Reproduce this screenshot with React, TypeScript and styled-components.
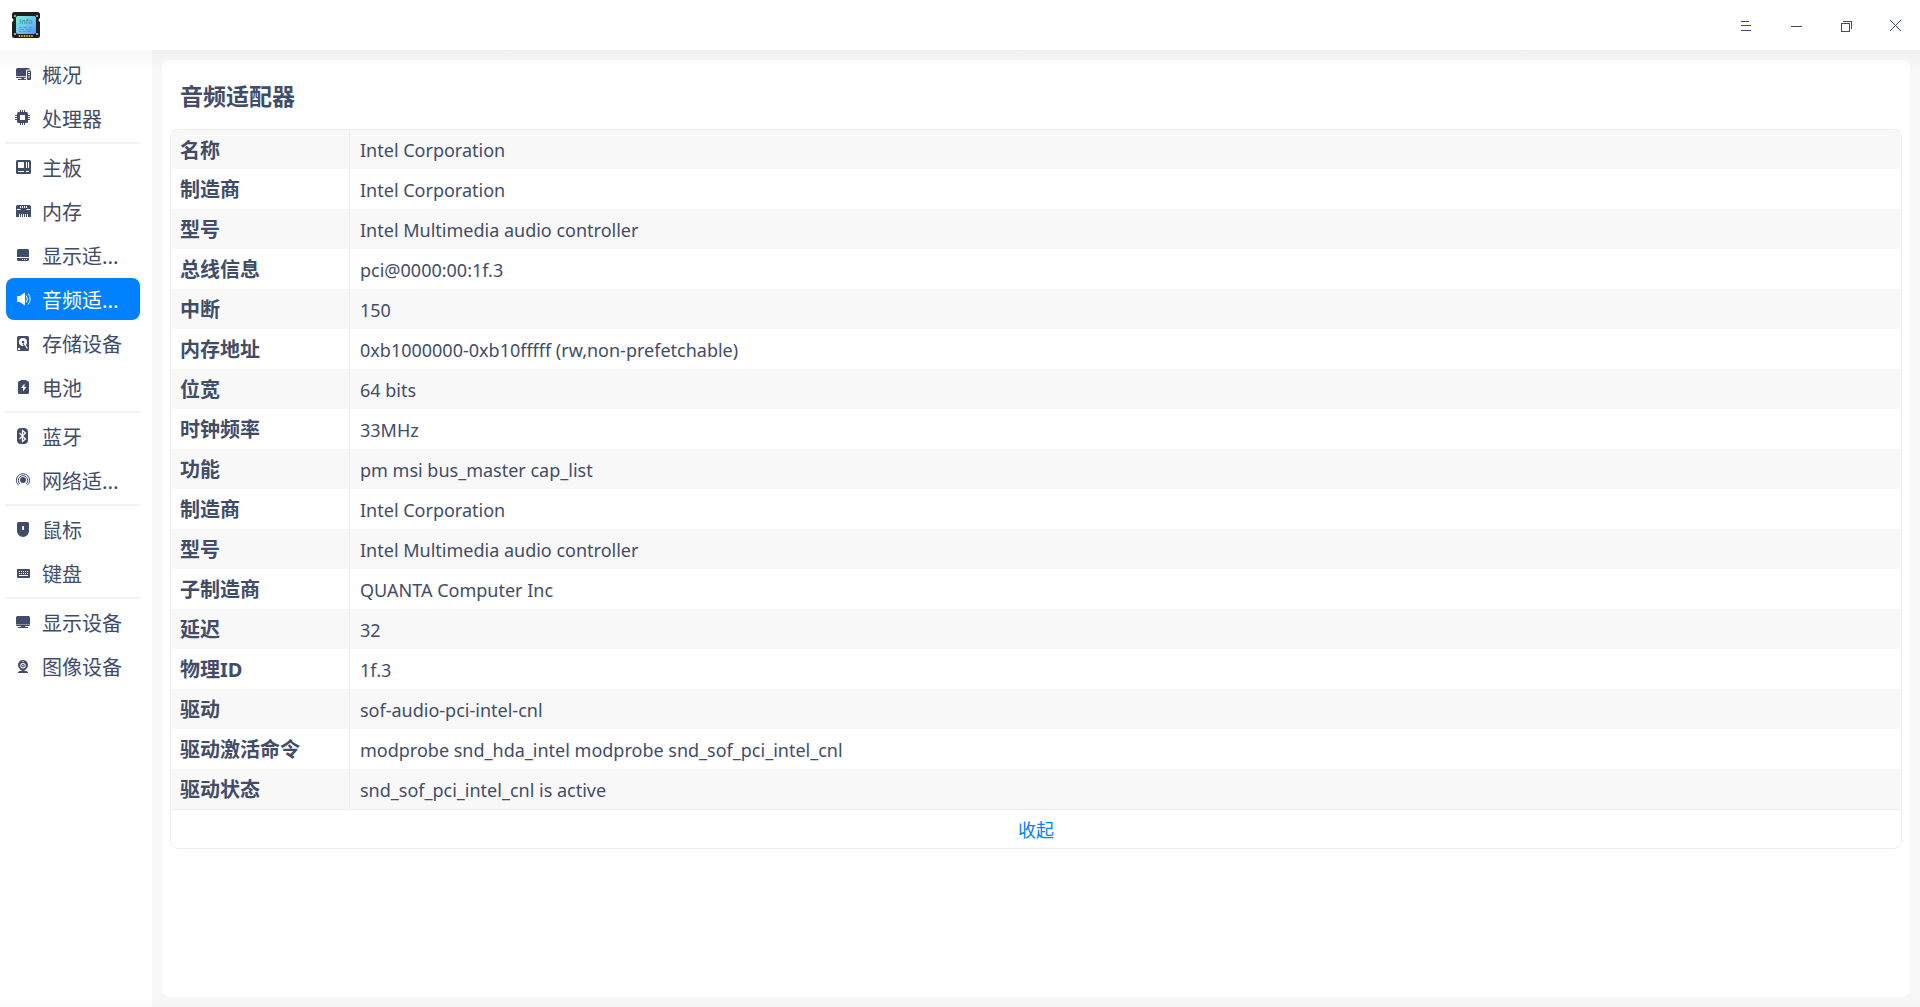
import React, { useState } from "react";
import styled, { createGlobalStyle } from "styled-components";

const color = {
  text: "#414d68",
  accent: "#0081ff",
  panel: "#f8f8f8",
  line: "#ededed",
};

const GlobalStyle = createGlobalStyle`
  *, *::before, *::after { box-sizing: border-box; }
  body {
    margin: 0;
    background: #fff;
    color: ${color.text};
    font-family: "Noto Sans", "Noto Sans CJK SC", sans-serif;
  }
  button { font: inherit; color: inherit; border: 0; background: none; padding: 0; cursor: pointer; }
`;

const Window = styled.div`
  display: grid;
  grid-template: 50px 1fr / 152px 1fr;
  min-height: 100vh;
`;

const TitleBar = styled.header`
  grid-column: 1 / -1;
  display: flex;
  align-items: center;
  justify-content: space-between;
  padding-left: 10px;
  background: #fff;
`;

const WindowControls = styled.div`
  display: flex;
`;

const ControlButton = styled.button`
  display: flex;
  align-items: center;
  justify-content: center;
  width: 50px;
  height: 50px;

  &:hover { background: rgba(0, 0, 0, 0.06); }
`;

const edgeShade =
  "linear-gradient(rgba(0, 0, 0, 0.03), rgba(0, 0, 0, 0) 20px), linear-gradient(to top, rgba(0, 0, 0, 0.02), rgba(0, 0, 0, 0) 8px)";

const Sidebar = styled.nav`
  padding: 3px 0;
  background: ${edgeShade}, #fff;
`;

const NavList = styled.ul`
  display: flex;
  flex-direction: column;
  gap: 2px;
  margin: 0;
  padding: 0;
  list-style: none;
`;

const NavRow = styled.li`
  padding: 0 12px 0 6px;
`;

const NavDivider = styled.li`
  height: 2px;
  margin: 1px 11px 0 5px;
  background: #f2f2f2;
`;

const NavButton = styled.button<{ $active: boolean }>`
  display: flex;
  align-items: center;
  gap: 10px;
  width: 100%;
  height: 42px;
  padding-left: 10px;
  border-radius: 8px;
  background: ${(p) => (p.$active ? color.accent : "transparent")};
  color: ${(p) => (p.$active ? "#fff" : color.text)};
  --knock: ${(p) => (p.$active ? color.accent : "#fff")};
`;

const NavLabel = styled.span`
  padding-top: 2px;
  font-family: "Noto Sans CJK SC", sans-serif;
  font-size: 20px;
  line-height: 30px;
  white-space: nowrap;
`;

const IconSvg = styled.svg`
  flex: none;
  overflow: visible;
`;

const Main = styled.main`
  display: flex;
  padding: 10px;
  background: ${edgeShade}, ${color.panel};
`;

const Card = styled.section`
  flex: 1;
  padding: 18px 8px;
  border-radius: 8px;
  background: linear-gradient(rgba(0, 0, 0, 0.012), rgba(0, 0, 0, 0) 10px), #fff;
`;

const Title = styled.h1`
  margin: 0 0 17px;
  padding-left: 10px;
  font-family: "Noto Sans CJK SC", sans-serif;
  font-size: 23px;
  line-height: 34px;
  font-weight: 700;
`;

const TableFrame = styled.div`
  border: 1px solid ${color.line};
  border-radius: 8px;
  overflow: hidden;
`;

const Table = styled.table`
  width: 100%;
  border-collapse: separate;
  border-spacing: 0;
`;

const Row = styled.tr`
  height: 40px;

  &:first-child { height: 39px; }
  &:nth-child(odd) { background: ${color.panel}; }
`;

const KeyCell = styled.th`
  width: 179px;
  padding: 2px 9px 0;
  border-right: 1px solid ${color.line};
  font-size: 20px;
  line-height: 30px;
  font-weight: 700;
  text-align: left;
  white-space: nowrap;
`;

const ValueCell = styled.td`
  padding: 1px 10px 0;
  font-size: 18px;
  line-height: 30px;
`;

const FoldButton = styled.button`
  display: block;
  width: 100%;
  height: 39px;
  border-top: 1px solid ${color.line};
  color: ${color.accent};
  font-family: "Noto Sans CJK SC", sans-serif;
  font-size: 18px;
  line-height: 30px;
`;

type IconName =
  | "overview" | "cpu" | "board" | "memory" | "gpu" | "audio" | "disk"
  | "battery" | "bluetooth" | "network" | "mouse" | "keyboard" | "monitor" | "camera";

const knock = "var(--knock)";

const drawings: Record<IconName, React.ReactNode> = {
  overview: (
    <>
      <path d="M1.500 2h11A1.500 1.500 0 0 1 14 3.500h-2.500a1.500 1.500 0 0 0-1.500 1.500V10H0V3.500A1.500 1.500 0 0 1 1.500 2z" />
      <path d="M0 10.700h10v.6q0 .7-.7.7H.7Q0 12 0 11.300zM5.500 12h2.500v1H10v1H2v-1h3.500z" />
      <rect x="11" y="4.500" width="4" height="9.500" rx="1" />
      <path d="M12 6.500h2M12 8.500h2M12 11h2" stroke={knock} strokeWidth="1" />
    </>
  ),
  cpu: (
    <>
      <rect x="1" y="2" width="11" height="11" rx="1.500" />
      <path d="M4.500 0v15M6.500 0v15M8.500 0v15M-1 5.500h15M-1 7.500h15M-1 9.500h15" stroke="currentColor" strokeWidth="1" />
      <rect x="4" y="5" width="5" height="5" rx="0.500" fill={knock} />
    </>
  ),
  board: (
    <>
      <rect x="0" y="1" width="15" height="14" rx="1.500" />
      <path d="M2.500 3h5l.5.500v5l-.5.500h-5L2 8.500v-5zM10 3h1v6h-1zM12 3h1v6h-1zM2 12h6v1H2zM10 12h3v1h-3z" fill={knock} />
    </>
  ),
  memory: (
    <>
      <path d="M1.500 2h12A1.500 1.500 0 0 1 15 3.500v10q0 .5-.5.5H.5Q0 14 0 13.500v-10A1.500 1.500 0 0 1 1.500 2z" />
      <path d="M4 3h1v2H4zM6 3h1v2H6zM8 3h1v2H8zM10 3h1v2h-1zM1 6h3l1 1H1zM11 6h3v1h-4zM3 11h1v3H3zM5 11h1v3H5zM7 11h1v3H7zM9 11h1v3H9zM11 11h1v3h-1z" fill={knock} />
    </>
  ),
  gpu: (
    <>
      <rect x="1" y="2" width="12" height="12" rx="1.500" />
      <path d="M1 10h12v1H1zM6 12h1v1H6zM8 12h1v1H8zM10 12h1v1h-1z" fill={knock} />
    </>
  ),
  audio: (
    <>
      <path d="M1.500 5H4l4-3q1-.5 1 .5v11q0 1-1 .5l-4-3H1.500Q1 11 1 10.500v-5Q1 5 1.500 5z" />
      <path d="M10.500 5q2 3 0 6M12.500 3q3.500 5 0 10" fill="none" stroke="currentColor" strokeWidth="1" strokeLinecap="round" />
    </>
  ),
  disk: (
    <>
      <rect x="1" y="1" width="12" height="15" rx="1.500" />
      <circle cx="7" cy="7" r="4" fill={knock} />
      <circle cx="7" cy="7" r="1.300" />
      <path d="M7 8.500l3 5" stroke="currentColor" strokeWidth="1.200" />
      <path d="M8.500 9l3 4.500M2.500 13.500h1v1h-1z" fill={knock} stroke={knock} strokeWidth="1.200" />
    </>
  ),
  battery: (
    <>
      <path d="M4.500 1h6v1h1A1.500 1.500 0 0 1 13 3.500v10a1.500 1.500 0 0 1-1.500 1.500h-8A1.500 1.500 0 0 1 2 13.500v-10A1.500 1.500 0 0 1 3.500 2h1z" />
      <path d="M8.500 4.500L5 9h2v3.500L10.500 8h-2z" fill={knock} />
    </>
  ),
  bluetooth: (
    <>
      <rect x="1" y="0" width="11" height="16" rx="4" />
      <path d="M3.500 5l6 6-3 2.500v-11l3 2.500-6 6" fill="none" stroke={knock} strokeWidth="1.200" />
    </>
  ),
  network: (
    <>
      <circle cx="7" cy="8" r="3" />
      <path d="M4 12a4.700 4.700 0 1 1 6 0M2.700 13.300a6.600 6.600 0 1 1 8.600 0" fill="none" stroke="currentColor" strokeWidth="1" />
    </>
  ),
  mouse: (
    <>
      <path d="M2.500 1h9A1.500 1.500 0 0 1 13 2.500V10a6 6 0 0 1-12 0V2.500A1.500 1.500 0 0 1 2.500 1z" />
      <rect x="6" y="5" width="2" height="4" rx="0.800" fill={knock} />
    </>
  ),
  keyboard: (
    <>
      <rect x="1" y="4" width="13" height="9" rx="1" />
      <path d="M3 6h1v1H3zM5 6h1v1H5zM7 6h1v1H7zM9 6h1v1H9zM11 6h1v1h-1zM3 8h1v1H3zM5 8h1v1H5zM7 8h1v1H7zM9 8h1v1H9zM11 8h1v1h-1zM3 10h9v1H3z" fill={knock} />
    </>
  ),
  monitor: (
    <>
      <path d="M1.500 2h11A1.500 1.500 0 0 1 14 3.500V11q0 1-1 1H9l.5 1H12v1H2v-1h2.500l.5-1H1q-1 0-1-1V3.500A1.500 1.500 0 0 1 1.500 2z" />
      <path d="M0 10.500h14" stroke={knock} strokeWidth="0.400" />
    </>
  ),
  camera: (
    <>
      <path d="M7 2a5 5 0 0 1 3.500 8.500L9.500 12.500 12 14v1H2v-1l2.500-1.500-1-2A5 5 0 0 1 7 2z" />
      <circle cx="7" cy="7.700" r="2.700" fill={knock} />
      <circle cx="7" cy="7.700" r="1.800" />
      <path d="M6.500 3h1v1h-1zM2.500 11.500l3 .5v1h-3zM8.500 12l3-.5v1.500h-3z" fill={knock} />
      <circle cx="7" cy="7.700" r="0.700" fill={knock} />
    </>
  ),
};

function Icon({ name }: { name: IconName }) {
  return (
    <IconSvg width="16" height="16" viewBox="0 0 16 16" fill="currentColor" aria-hidden="true">
      {drawings[name]}
    </IconSvg>
  );
}

function Logo() {
  return (
    <IconSvg width="32" height="32" viewBox="0 0 32 32" role="img" aria-label="info">
      <defs>
        <linearGradient id="screen" x1="0" y1="0" x2="1" y2="1">
          <stop offset="0" stopColor="#7cf3d3" />
          <stop offset="0.500" stopColor="#6fc6ee" />
          <stop offset="1" stopColor="#5a97fa" />
        </linearGradient>
      </defs>
      <path d="M4.500 3h23A2.500 2.500 0 0 1 30 5.500V9q-1.500 1-1.500 2t1.500 2v13.500a2.500 2.500 0 0 1-2.500 2.500h-23A2.500 2.500 0 0 1 2 26.500V13q1.500-1 1.500-2T2 9V5.500A2.500 2.500 0 0 1 4.500 3z" fill="#1f1f21" />
      <rect x="6" y="7" width="20" height="18" rx="2" fill="url(#screen)" />
      <g fill="#b9bcc0">
        <circle cx="5" cy="7" r="1.100" />
        <circle cx="27" cy="7" r="1.100" />
        <circle cx="5" cy="25" r="1.100" />
        <circle cx="27" cy="25" r="1.100" />
      </g>
      <path d="M9.500 26v2M12 26v2M14.500 26v2M17 26v2M19.500 26v2M22 26v2" stroke="#e0b32c" strokeWidth="1.400" />
      <path d="M9 18.500h3M13.500 18.500h4M19 18.500h3M9 20.500h5M15.500 20.500h7M9 22.500h2M12.500 22.500h3M17 22.500h4" stroke="#3e86b4" strokeWidth="0.600" />
      <text x="16" y="15" textAnchor="middle" fontFamily="Noto Sans, sans-serif" fontWeight="600" fontSize="7" fill="#3f9aa5">info</text>
    </IconSvg>
  );
}

const controls: { label: string; path: string }[] = [
  { label: "菜单", path: "M4 4.500h8M4 8.500h10M4 13.500h10" },
  { label: "最小化", path: "M4 9.500h11" },
  { label: "还原", path: "M4.500 6.500h8v8h-8zM6 4.500h8.500V12" },
  { label: "关闭", path: "M3 3l11 11M14 3L3 14" },
];

type NavEntry = { icon: IconName; label: string };

const groups: NavEntry[][] = [
  [
    { icon: "overview", label: "概况" },
    { icon: "cpu", label: "处理器" },
  ],
  [
    { icon: "board", label: "主板" },
    { icon: "memory", label: "内存" },
    { icon: "gpu", label: "显示适..." },
    { icon: "audio", label: "音频适..." },
    { icon: "disk", label: "存储设备" },
    { icon: "battery", label: "电池" },
  ],
  [
    { icon: "bluetooth", label: "蓝牙" },
    { icon: "network", label: "网络适..." },
  ],
  [
    { icon: "mouse", label: "鼠标" },
    { icon: "keyboard", label: "键盘" },
  ],
  [
    { icon: "monitor", label: "显示设备" },
    { icon: "camera", label: "图像设备" },
  ],
];

const details: [string, string][] = [
  ["名称", "Intel Corporation"],
  ["制造商", "Intel Corporation"],
  ["型号", "Intel Multimedia audio controller"],
  ["总线信息", "pci@0000:00:1f.3"],
  ["中断", "150"],
  ["内存地址", "0xb1000000-0xb10fffff (rw,non-prefetchable)"],
  ["位宽", "64 bits"],
  ["时钟频率", "33MHz"],
  ["功能", "pm msi bus_master cap_list"],
  ["制造商", "Intel Corporation"],
  ["型号", "Intel Multimedia audio controller"],
  ["子制造商", "QUANTA Computer Inc"],
  ["延迟", "32"],
  ["物理ID", "1f.3"],
  ["驱动", "sof-audio-pci-intel-cnl"],
  ["驱动激活命令", "modprobe snd_hda_intel modprobe snd_sof_pci_intel_cnl"],
  ["驱动状态", "snd_sof_pci_intel_cnl is active"],
];

export default function App() {
  const [active, setActive] = useState<IconName>("audio");
  const [open, setOpen] = useState(true);
  const shown = open ? details : details.slice(0, 9);

  return (
    <>
      <GlobalStyle />
      <Window>
        <TitleBar>
          <Logo />
          <WindowControls>
            {controls.map((c) => (
              <ControlButton key={c.label} type="button" aria-label={c.label}>
                <svg width="16" height="16" viewBox="0 0 16 16" fill="none" stroke="currentColor" shapeRendering="crispEdges" aria-hidden="true">
                  <path d={c.path} />
                </svg>
              </ControlButton>
            ))}
          </WindowControls>
        </TitleBar>

        <Sidebar>
          <NavList>
            {groups.map((group, g) => (
              <React.Fragment key={g}>
                {g > 0 && <NavDivider role="separator" />}
                {group.map((entry) => (
                  <NavRow key={entry.icon}>
                    <NavButton
                      type="button"
                      $active={entry.icon === active}
                      aria-current={entry.icon === active ? "page" : undefined}
                      onClick={() => setActive(entry.icon)}
                    >
                      <Icon name={entry.icon} />
                      <NavLabel>{entry.label}</NavLabel>
                    </NavButton>
                  </NavRow>
                ))}
              </React.Fragment>
            ))}
          </NavList>
        </Sidebar>

        <Main>
          <Card>
            <Title>音频适配器</Title>
            <TableFrame>
              <Table>
                <tbody>
                  {shown.map(([key, value], i) => (
                    <Row key={i}>
                      <KeyCell scope="row">{key}</KeyCell>
                      <ValueCell>{value}</ValueCell>
                    </Row>
                  ))}
                </tbody>
              </Table>
              <FoldButton type="button" aria-expanded={open} onClick={() => setOpen(!open)}>
                {open ? "收起" : "展开"}
              </FoldButton>
            </TableFrame>
          </Card>
        </Main>
      </Window>
    </>
  );
}
